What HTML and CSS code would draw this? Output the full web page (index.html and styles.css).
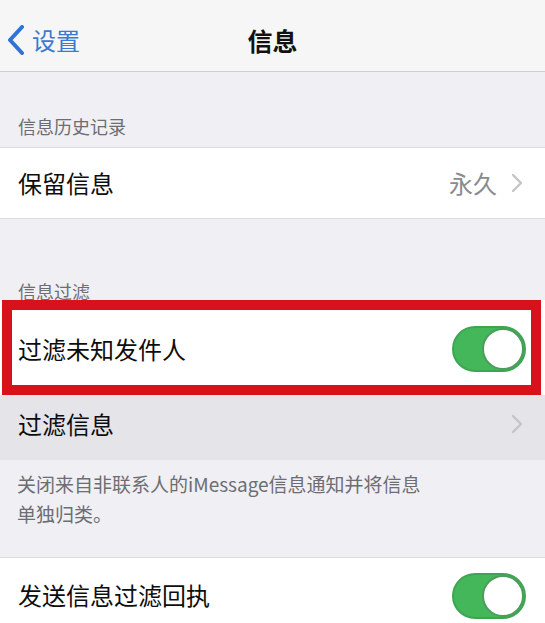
FILE: index.html
```html
<!DOCTYPE html>
<html lang="zh-CN">
<head>
<meta charset="utf-8">
<title>信息</title>
<link rel="stylesheet" href="styles.css">
</head>
<body>
<div class="screen">
  <header class="nav">
    <div class="back">
      <svg class="back-chevron" width="18" height="30" viewBox="0 0 18 30"><path d="M15 2 L3 15 L15 28" fill="none" stroke="#2f72d8" stroke-width="4" stroke-linecap="round" stroke-linejoin="round"/></svg>
      <span class="back-label">设置</span>
    </div>
    <div class="nav-title">信息</div>
    <div class="nav-spacer"></div>
  </header>

  <div class="gap gap-first">
    <div class="section-header">信息历史记录</div>
  </div>
  <div class="row row-72">
    <span class="row-label">保留信息</span>
    <span class="row-detail">永久</span>
    <svg class="chevron" width="12" height="20" viewBox="0 0 12 20"><path d="M2 2 L10 10 L2 18" fill="none" stroke="#c4c4c9" stroke-width="2.4" stroke-linecap="round" stroke-linejoin="round"/></svg>
  </div>

  <div class="gap gap-second">
    <div class="section-header section-header-tight">信息过滤</div>
  </div>
  <div class="row row-marked">
    <span class="row-label">过滤未知发件人</span>
    <span class="toggle"><span class="knob"></span></span>
  </div>
  <div class="row row-pressed">
    <span class="row-label">过滤信息</span>
    <svg class="chevron" width="12" height="20" viewBox="0 0 12 20"><path d="M2 2 L10 10 L2 18" fill="none" stroke="#c4c4c9" stroke-width="2.4" stroke-linecap="round" stroke-linejoin="round"/></svg>
  </div>
  <div class="footer-note">关闭来自非联系人的iMessage信息通知并将信息<br>单独归类。</div>
  <div class="row row-last">
    <span class="row-label">发送信息过滤回执</span>
    <span class="toggle"><span class="knob"></span></span>
  </div>
</div>
</body>
</html>
```

FILE: styles.css
```css
html, body {
  margin: 0;
  padding: 0;
  background: #efeff4;
  overflow: hidden;
}

.screen {
  width: 545px;
  height: 623px;
  overflow: hidden;
  font-family: "Noto Sans CJK SC", "Noto Sans", sans-serif;
  color: #0a0a0a;
  background: #efeff4;
}

.nav {
  height: 72px;
  box-sizing: border-box;
  padding-top: 8px;
  display: grid;
  grid-template-columns: 1fr auto 1fr;
  align-items: center;
  background: #f6f6f6;
  border-bottom: 1px solid #cfcfd3;
}

.back {
  display: flex;
  align-items: center;
  gap: 7px;
  padding-left: 7px;
}

.back-chevron {
  display: block;
}

.back-label {
  font-size: 24px;
  line-height: 30px;
  color: #3a7ad2;
}

.nav-title {
  font-size: 25px;
  font-weight: 700;
  line-height: 30px;
  color: #111;
}

.gap {
  display: flex;
  flex-direction: column;
  justify-content: flex-end;
  background: #efeff4;
}

.gap-first {
  height: 75px;
  box-sizing: border-box;
  padding-bottom: 9px;
}

.gap-second {
  height: 81px;
  box-sizing: border-box;
}

.section-header {
  padding-left: 18px;
  font-size: 18px;
  line-height: 24px;
  color: #6d6d72;
}

.section-header-tight {
  line-height: 18px;
}

.row {
  display: flex;
  align-items: center;
  box-sizing: border-box;
  padding-left: 18px;
  padding-right: 19px;
  background: #ffffff;
}

.row-label {
  flex: 1;
  font-size: 24px;
  line-height: 30px;
  color: #0d0d0d;
}

.row-72 {
  height: 72px;
  border-top: 1px solid #dcdce0;
  border-bottom: 1px solid #dcdce0;
  padding-right: 22px;
}

.row-detail {
  font-size: 24px;
  line-height: 30px;
  color: #8a8a8f;
  margin-right: 14px;
}

.chevron {
  display: block;
}

.row-marked {
  position: relative;
  height: 95px;
  padding-top: 2px;
}

.row-marked::after {
  content: "";
  position: absolute;
  top: 0;
  left: 2px;
  right: 4px;
  bottom: 0;
  border: 10px solid #d8121d;
  pointer-events: none;
}

.row-pressed {
  height: 65px;
  background: #e4e4e9;
  padding-right: 22px;
  padding-bottom: 8px;
}

.footer-note {
  height: 98px;
  box-sizing: border-box;
  padding: 9px 18px 0 17px;
  font-size: 19px;
  line-height: 30px;
  color: #6d6d72;
  background: #efeff4;
  border-bottom: 1px solid #dcdce0;
}

.row-last {
  height: 88px;
  align-items: flex-start;
  padding-top: 15px;
}

.row-last .row-label {
  margin-top: 7px;
}

.toggle {
  position: relative;
  display: block;
  width: 74px;
  height: 46px;
  border-radius: 23px;
  background: #43b75a;
  box-sizing: border-box;
  border: 2px solid #3ea653;
}

.knob {
  position: absolute;
  top: 0;
  right: 0;
  width: 42px;
  height: 42px;
  border-radius: 50%;
  background: #ffffff;
  box-sizing: border-box;
  border: 2px solid #4a9d5b;
}
```
